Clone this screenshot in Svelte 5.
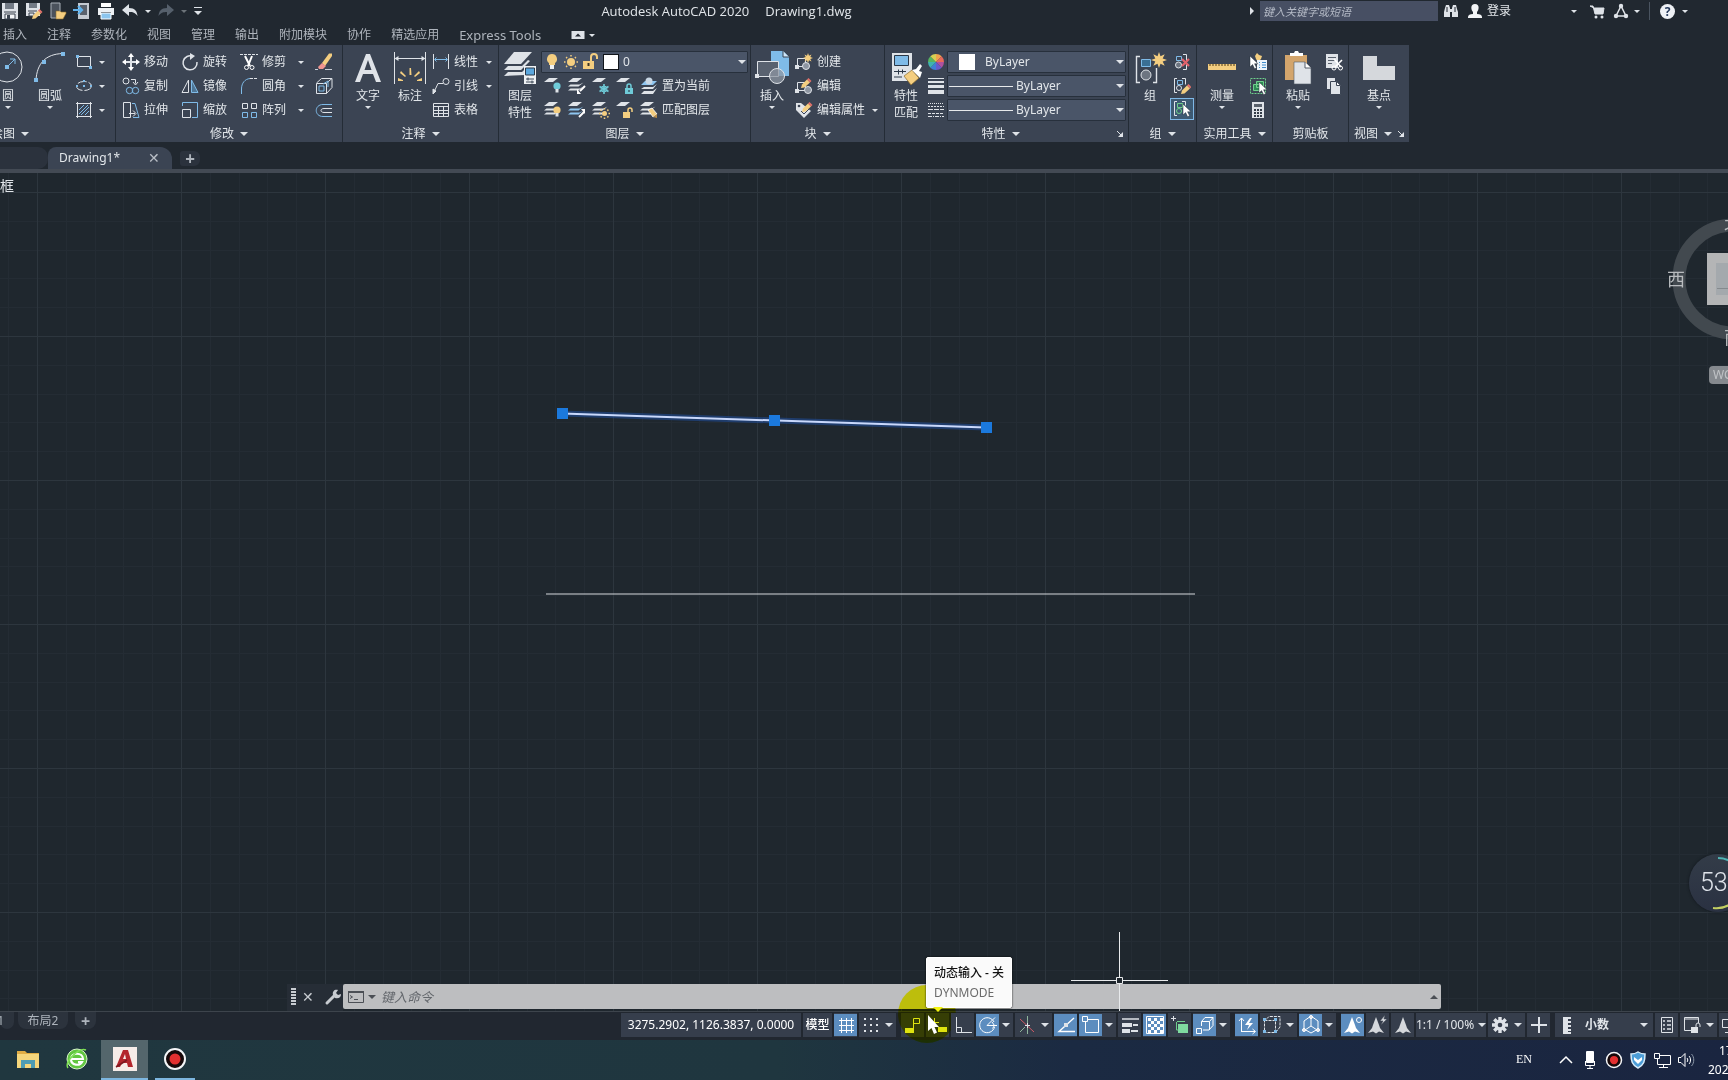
<script>
  const W = '#dfe3e8';
  const B = '#7fbbe8';
  const Y = '#f4ce80';
  const T = '#6fcbd8';
  const G = '#6fd08c';

  const sheet = (x, y, w, c) => `<path d="M${x} ${y + 4}l5-4h${w}l-5 4z" fill="${c}" stroke="none"/>`;
  const sheets = (c1, c2) =>
    sheet(0, 1, 9, W) +
    `<path d="M0 9.500l2.500-2h9l4-2-5 4zM0 13.500l2.500-2h9l3-1.500-4 3.500z" fill="${c1}" stroke="${c2}" stroke-width=".6"/>`;
  const bulb = (x, y, c) =>
    `<circle cx="${x}" cy="${y}" r="3.600" fill="${c}" stroke="none"/><path d="M${x - 1.5} ${y + 3}h3v3.500h-3z" fill="${W}" stroke="none"/>`;
  const pencil = (x, y) =>
    `<path d="M${x} ${y}l1-3.500 5-5 3 3-5.500 5z" fill="${Y}" stroke="none"/><path d="M${x + 6} ${y - 8.5}l1.500-1.500 3 3-1.500 1.500z" fill="#e2716a" stroke="none"/>`;
  const burst = (x, y, r, c) => {
    let d = '';
    for (let i = 0; i < 16; i++) {
      const a = (i * Math.PI) / 8;
      const q = i % 2 ? r * 0.5 : r;
      d += `${i ? 'L' : 'M'}${(x + q * Math.cos(a)).toFixed(1)} ${(y + q * Math.sin(a)).toFixed(1)}`;
    }
    return `<path d="${d}z" fill="${c}" stroke="none"/>`;
  };
  const sun = (x, y, r) => {
    let d = '';
    for (let i = 0; i < 8; i++) {
      const a = (i * Math.PI) / 4;
      d += `M${(x + (r + 1.5) * Math.cos(a)).toFixed(1)} ${(y + (r + 1.5) * Math.sin(a)).toFixed(1)}L${(x + (r + 3) * Math.cos(a)).toFixed(1)} ${(y + (r + 3) * Math.sin(a)).toFixed(1)}`;
    }
    return `<circle cx="${x}" cy="${y}" r="${r}" fill="${Y}" stroke="none"/><path d="${d}" stroke="${Y}" stroke-width="1.500"/>`;
  };
  const pointer = (x, y) =>
    `<path d="M${x} ${y}v11l2.600-2.400 2 4.200 2-1-2-4h3.500z" fill="#fff" stroke="#27303b" stroke-width=".5"/>`;
  const wheel = () => {
    const cs = ['#f0a34c', '#e8695a', '#b0519e', '#6a5acb', '#3f7fd6', '#3fb3b0', '#57b560', '#d8cf52'];
    return cs
      .map((c, i) => {
        const a = (i * Math.PI) / 4 - Math.PI / 2;
        const b = a + Math.PI / 4;
        return `<path d="M9 9L${(9 + 8 * Math.cos(a)).toFixed(1)} ${(9 + 8 * Math.sin(a)).toFixed(1)}A8 8 0 0 1 ${(9 + 8 * Math.cos(b)).toFixed(1)} ${(9 + 8 * Math.sin(b)).toFixed(1)}z" fill="${c}" stroke="none"/>`;
      })
      .join('');
  };
  const checker = () => {
    let s = '';
    for (let i = 0; i < 5; i++)
      for (let j = 0; j < 5; j++) if ((i + j) % 2 === 0) s += `<path d="M${5 + i * 3} ${5 + j * 3}h3v3h-3z" fill="#fff" stroke="none"/>`;
    return s;
  };
  const compass = 'M12 3l3 8 1 3 4 5-5-1.500-3 2-3-2L4 19l4-5 1-3z';

  const icons = {
    save: [18, 18, `<path d="M1 1h16v16H1z" fill="${W}" stroke="none"/><path d="M4 1h9v6H4zM10 2h2v4h-2z" fill="#737b86" stroke="none"/><path d="M3 10h12M4 12h10v5H4z" stroke="#3a434f" fill="#f4f6f8"/><path d="M6 13h3v4H6z" fill="#3a434f" stroke="none"/>`],
    saveas: [18, 18, `<path d="M1 1h14v13H1z" fill="${W}" stroke="none"/><path d="M4 1h8v5H4z" fill="#737b86" stroke="none"/><path d="M3 9h9M4 11h5v3H4z" stroke="#3a434f"/>` + pencil(7, 17)],
    open: [18, 18, `<path d="M2 1h9v15H2z" fill="#4b525c" stroke="#aab0b8"/><path d="M7 9h4l1 1h5v1.500l-3 5.500H7z" fill="${Y}" stroke="#8a6b2c" stroke-width=".6"/>`],
    upload: [18, 18, `<path d="M5 1h11v16H5z" fill="#c3c9d0" stroke="none"/><path d="M7 3h7v10H7z" fill="#59616c" stroke="none"/><path d="M0 8h8M5 4l4 4-4 4" stroke="#5fb0ea" stroke-width="2.200"/>`],
    print: [18, 18, `<path d="M4 1h10v4H4z" fill="#fff" stroke="none"/><path d="M1 6h16v7h-3v-3H4v3H1z" fill="#eef1f4" stroke="none"/><path d="M4 11h10v6H4z" fill="#8dc6ee" stroke="#fff" stroke-width="1"/>`],
    undo: [18, 18, `<path d="M1 8l7-6v4c6 0 8 3 8.500 8C14 10.500 12 10 8 10v4z" fill="${W}" stroke="none"/>`],
    redo: [18, 18, `<path d="M17 8l-7-6v4C4 6 2 9 1.500 14 4 10.500 6 10 10 10v4z" fill="#56606c" stroke="none"/>`],
    more: [10, 10, `<path d="M1 1.500h8" /><path d="M1 5h8L5 9z" fill="${W}" stroke="none"/>`],
    bino: [16, 16, `<path d="M2 5l1-3h3l1 3v9H1V9zM9 5l1-3h3l1 4 1 3v5H9z" fill="${W}" stroke="none"/><path d="M7 6h2v3H7z" fill="${W}" stroke="none"/><path d="M4 4v5M12 4v5" stroke="#212730"/>`],
    user: [14, 16, `<path d="M7 1c5 0 4 6 2 8v2c3 0 5 1 5 3v1H0v-1c0-2 2-3 5-3V9C3 7 2 1 7 1z" fill="#f2f4f6" stroke="none"/>`],
    cart: [16, 16, `<path d="M1 3h3l2 8h8l1-6H5z" fill="${W}" stroke="${W}"/><circle cx="7" cy="14" r="1.500" fill="${W}" stroke="none"/><circle cx="13" cy="14" r="1.500" fill="${W}" stroke="none"/>`],
    share: [16, 16, `<path d="M8 3L3 13h10z" stroke-width="1.500"/><circle cx="8" cy="3" r="2.200" fill="${W}" stroke="none"/><circle cx="3" cy="13" r="2.200" fill="${W}" stroke="none"/><circle cx="13" cy="13" r="2.200" fill="${W}" stroke="none"/>`],
    ribbon: [14, 8, `<path d="M1 0h12v8H1z" fill="${W}" stroke="${W}" stroke-linejoin="round"/><path d="M4 5.500L7 2.500l3 3z" fill="#212730" stroke="none"/>`],
    circle: [34, 34, `<circle cx="16" cy="16" r="15"/><path d="M16 16l8-8M19 8h5v5" stroke="${B}"/><path d="M14 14h4v4h-4z" fill="${B}" stroke="none"/>`],
    arc: [34, 34, `<path d="M3 29C4 13 12 3 30 2.500"/><path d="M1 27h4v4H1zM9 9h4v4H9zM28 1h4v4h-4z" fill="${B}" stroke="none"/>`],
    rect: [18, 18, `<path d="M2.500 3.500h13v10h-13z"/><path d="M1 2h3v3H1zM14 13h3v3h-3z" fill="${B}" stroke="none"/>`],
    ellipse: [18, 18, `<ellipse cx="9" cy="9" rx="7.500" ry="4.500" stroke-dasharray="9 2"/><path d="M8 8h2v2H8zM1 8h2v2H1zM15 8h2v2h-2zM8 3h2v2H8z" fill="${B}" stroke="none"/>`],
    hatch: [18, 18, `<path d="M1 2.500h16M1 15.500h16M2.500 1v16M15.500 1v16"/><path d="M4 9l5-5M4 13l9-9M6 14l8-8M10 14l4-4" stroke="${B}"/>`],
    move: [18, 18, `<path d="M9 2v14M2 9h14" stroke-width="2"/><path d="M9 0l3 4H6zM9 18l3-4H6zM0 9l4-3v6zM18 9l-4-3v6z" fill="#fff" stroke="none"/>`],
    rotate: [18, 18, `<path d="M12 3.500A7 7 0 1 0 16 9" stroke-width="1.500"/><path d="M9 0l5 3-5 4z" fill="${W}" stroke="none"/>`],
    trim: [18, 18, `<path d="M0 1.500h18" stroke-dasharray="3 1"/><path d="M5 3l5 10M12 3l-4 10" stroke-width="2" stroke="#fff"/><circle cx="6.500" cy="14.500" r="2" stroke="#fff"/><circle cx="12" cy="14.500" r="2" stroke="#fff"/>`],
    erase: [18, 18, `<path d="M0 16.500h3M10 16.500h7" stroke="#c9ced5"/><path d="M7 10l7-9.500h3V3l-7 10z" fill="${Y}" stroke="none"/><path d="M7 10l4 3-3 3H4l-1-2z" fill="#ef9490" stroke="none"/>`],
    copy: [18, 18, `<circle cx="4" cy="4" r="3"/><path d="M9 2.500h4.500v4M11 5l2.500 3L16 5"/><circle cx="7.500" cy="13.500" r="3.200" stroke="${B}"/><circle cx="13.500" cy="13.500" r="3.200" stroke="${B}"/>`],
    mirror: [18, 18, `<path d="M7.500 3v12.500H1z"/><path d="M10.500 3v12.500H17z" stroke="${B}" fill="#4e7696"/>`],
    fillet: [18, 18, `<path d="M1.500 17v-5C1.500 6 5 2 10 1.500" stroke="${B}"/><path d="M10 1.500h7" stroke-dasharray="3 1"/>`],
    box: [18, 18, `<path d="M1.500 6.500h10v10h-10zM1.500 6l5-4.500H17v9l-5.500 6M11.500 6L17 1.500"/><path d="M4 9h5v5H4zM8 7l5-3v6" stroke="${B}"/>`],
    stretch: [18, 18, `<path d="M1.500 1.500h7v15h-7zM7 12.500h6M11 9.500l3 3-3 3"/><path d="M10 2.500h3l4 14h-6" stroke="${B}"/>`],
    scale: [18, 18, `<path d="M1.500 5V1.500h15v15H11" stroke="${B}"/><path d="M1.500 8.500h8v8h-8z"/>`],
    array: [18, 18, `<path d="M2.500 2.500h5v5h-5zM11.500 2.500h5v5h-5z"/><path d="M2.500 11.500h5v5h-5zM11.500 11.500h5v5h-5z" stroke="${B}"/>`],
    offset: [18, 18, `<path d="M17 3.500H8C-1 3.500-1 15.500 8 15.500h9" stroke="${B}"/><path d="M17 7.500H9c-4 0-4 4 0 4h8"/>`],
    text: [34, 34, `<path d="M4 31L15 3h4l11 28h-5l-3-8H12l-3 8zM13.500 19h7L17 9z" fill="${W}" stroke="none" fill-rule="evenodd"/>`],
    dim: [34, 34, `<path d="M1.500 1v32M32.500 1v32M3 7.500h28"/><path d="M1.500 7.500l4-2.500v5zM32.500 7.500l-4-2.500v5z" fill="${W}" stroke="none"/><path d="M5 27l5 2v1H5zM29 27l-5 2v1h5zM8 20l5 5-1 1-5-4zM26 20l-5 5 1 1 5-4zM16.500 17h1.500l.5 7h-2z" fill="${Y}" stroke="none"/>`],
    linear: [18, 18, `<path d="M1.500 1v15M16.500 1v15"/><path d="M3 6.500h12M4.500 4.500l-2 2 2 2M13.500 4.500l2 2-2 2" stroke="${B}"/>`],
    leader: [18, 18, `<path d="M2 15L6 6.500h5"/><path d="M1 17v-5l3 2z" fill="${W}"/><circle cx="14" cy="4.500" r="3"/>`],
    table: [18, 18, `<path d="M1.500 2.500h15v13h-15zM1 5.500h16M1 9.500h16M1 12.500h16M6.500 5v11M11.500 5v11"/>`],
    layers: [34, 34, `<path d="M1 13L11 1h18L18 13z" fill="${W}" stroke="none"/><path d="M1 19l4-4h14l6-6 2 1-9 9zM1 25l4-4h14l3-3v6z" fill="${W}" stroke="none"/><path d="M21 15h12v18H21z" fill="#eef1f4" stroke="none"/><path d="M22.500 17h9v7h-9z" fill="#5ba7de" stroke="#2b3848"/><path d="M23 28h8M23 31h8M25 26.500v3M29 29.500v3" stroke="#2b3848" stroke-width=".9"/>`],
    l1: [18, 18, sheet(0, 1, 9, W) + bulb(13, 9, T)],
    l2: [18, 18, sheets(W, 'none') + `<path d="M17 9l-5 5" stroke-width="2" stroke="#fff"/><path d="M9 17v-5l4 5z" fill="#fff" stroke="none"/>`],
    l3: [18, 18, sheet(0, 1, 9, W) + `<path d="M12 7v10M7.500 9.500l9 5M16.500 9.500l-9 5" stroke="${T}" stroke-width="1.600"/><circle cx="12" cy="12" r="3"  stroke="${T}"/>`],
    l4: [18, 18, sheet(0, 1, 9, W) + `<path d="M9 11h8v6H9z" fill="${T}" stroke="none"/><path d="M11 11V9a2 2 0 0 1 4 0v2" stroke="${T}" stroke-width="1.500"/><path d="M13 13v2" stroke="#223"/>`],
    l5: [18, 18, `<path d="M1 8l4-4h12l-4 4z" fill="#8ec5ef" stroke="none"/><path d="M1 12l3-2h9l4-3-4 5zM1 17l3-3h9l4-3-4 6z" fill="${W}" stroke="none"/><circle cx="9" cy="4" r="3.500" fill="#c9d7e4" stroke="none"/>`],
    l6: [18, 18, sheets(W, 'none') + bulb(13, 9, Y)],
    l7: [18, 18, sheets('#8ec5ef', 'none') + `<path d="M11 16l5-5" stroke-width="2" stroke="#fff"/><path d="M17 8v5l-4-5z" fill="#fff" stroke="none"/>`],
    l8: [18, 18, sheets(W, 'none') + sun(12.5, 12.5, 2.5)],
    l9: [18, 18, sheet(0, 1, 9, W) + `<path d="M7 11h7v6H7z" fill="${Y}" stroke="none"/><path d="M12 11V9a2 2 0 0 1 4 0v2" stroke="${Y}" stroke-width="1.500"/>`],
    l10: [18, 18, sheets(W, 'none') + `<path d="M8 9l4-2 5 6-4 3z" fill="${Y}" stroke="#fff" stroke-width=".8"/><path d="M13 16l4-3v4z" fill="#b98d49" stroke="none"/>`],
    bulb: [18, 18, `<path d="M9 1a5 5 0 0 1 3 9v2H6v-2a5 5 0 0 1 3-9z" fill="${Y}" stroke="none"/><path d="M7 12h4v4H7z" fill="#eef1f4" stroke="none"/>`],
    sun: [18, 18, sun(9, 9, 4)],
    unlock: [18, 18, `<path d="M2 8h11v8H2z" fill="${Y}" stroke="none"/><path d="M10 8V4a3 3 0 0 1 6 0v2" stroke="${Y}" stroke-width="2"/><path d="M7.500 10v3" stroke="#3b3426" stroke-width="2"/>`],
    insert: [34, 34, `<path d="M16 0h12l6 6v19H16z" fill="#7fbbe8" stroke="none"/><path d="M28 0v6h6" fill="#cfe6f8" stroke="#3b4453"/><path d="M2.500 10.500h21v15h-21z" fill="#596270"/><circle cx="22" cy="25" r="7.500" fill="#8e96a2" fill-opacity=".75"/><path d="M0 23h4v4H0z" fill="${W}" stroke="none"/>`],
    bcreate: [18, 18, `<path d="M2.500 5.500h8v8h-8z"/><circle cx="11" cy="13" r="3.500" fill="#8e96a2"/><path d="M0 12h4v4H0z" fill="${W}" stroke="none"/>` + burst(13, 5, 5, Y)],
    bedit: [18, 18, `<path d="M2.500 5.500h8v8h-8z"/><circle cx="13" cy="13" r="3.500" fill="#8e96a2"/><path d="M0 12h4v4H0z" fill="${W}" stroke="none"/>` + pencil(6, 11)],
    battr: [18, 18, `<path d="M1 2h5l10 8-7 7-8-8z" fill="${W}" stroke="none"/><circle cx="4" cy="5" r="1.300" fill="#3b4453" stroke="none"/><path d="M6 10l3 3 5-5" stroke="#3b4453"/>` + pencil(7, 11)],
    match: [34, 34, `<path d="M3 2h20v28H3z" fill="${W}" stroke="none"/><path d="M5.500 4.500h14v10h-14z" fill="#7fbbe8" stroke="#2b3848"/><path d="M5 20.500h12M5 26h8M9.500 18.500v5M13.500 18.500v4" stroke="#2b3848"/><path d="M15 25l8-6 7 8-8 7z" fill="${Y}" stroke="#8a6b2c" stroke-width=".7"/><path d="M23 19l4-1 4-5 2 2-3 5 3 1-2 6z" fill="#fff" stroke="none"/>`],
    wheel: [18, 18, wheel()],
    weights: [18, 18, `<path d="M1 1.500h16" stroke-width="1"/><path d="M1 5h16" stroke-width="2"/><path d="M1 9.500h16" stroke-width="3"/><path d="M1 15h16" stroke-width="4"/>`],
    types: [18, 18, `<path d="M1 2.500h16" stroke-dasharray="1 1"/><path d="M1 5.500h16" stroke-dasharray="2 1"/><path d="M1 8.500h16" stroke-dasharray="5 1"/><path d="M1 12.500h16" stroke-dasharray="3 1"/><path d="M1 15.500h16" stroke-dasharray="4 1 1 1"/>`],
    group: [34, 34, `<path d="M7 5.500H3.500v26H7M20 31.500h3.500V17" stroke-width="1.400"/><path d="M8.500 8.500h9v7h-9z" fill="#3a6f94" stroke="${B}"/><circle cx="13" cy="24" r="5" fill="#6d7581"/>` + burst(26, 9, 8, Y)],
    g1: [18, 18, `<path d="M10 1.500h3.500v15H10" /><path d="M3.500 3.500h5v4h-5z" stroke="${B}"/><circle cx="5.500" cy="12" r="3" fill="#6d7581"/><path d="M9 6l7 7M16 6l-7 7" stroke="#e0626b" stroke-width="2.200"/>`],
    g2: [18, 18, `<path d="M4 1.500H1.500v14H4M9 1.500h3.500v6" /><path d="M4.500 3.500h5v4h-5z" stroke="${B}"/><circle cx="6" cy="11" r="2.500"/>` + pencil(8, 17)],
    g3: [18, 18, `<path d="M4 1.500H1.500v14H4M9 1.500h3.500v4"/><path d="M4.500 3.500h5v4h-5z" stroke="${G}"/><circle cx="6" cy="11" r="2.500" stroke="${G}"/>` + pointer(10, 4)],
    ruler: [34, 34, `<path d="M3 13h28v6H3z" fill="${Y}" stroke="none"/><path d="M5 13v2M8 13v2M11 13v2M14 13v2M17 13v2M20 13v2M23 13v2M26 13v2M29 13v2" stroke="#6b5426" stroke-width="1.200"/>`],
    qsel: [18, 18, `<path d="M8 0l2 2 3 1-1 3-3 3-2-3-1-3z" fill="${Y}" stroke="none"/><path d="M8 7h10v10H8z" fill="#eef5fb" stroke="none"/><path d="M10 9.500h1M13 9.500h4M10 12h1M13 12h4M10 14.500h1M13 14.500h4" stroke="#3f8ccc" stroke-width="1.200"/>` + pointer(1, 3)],
    selall: [18, 18, `<path d="M1.500 1.500h15v15h-15z" stroke="${G}" stroke-dasharray="2 1"/><path d="M4.500 7.500h8v6h-8zM7.500 4.500h7v6h-7z" fill="#2f8a55" stroke="${G}"/>` + pointer(10, 5)],
    calc: [18, 18, `<path d="M3 1h12v16H3z" fill="${W}" stroke="none"/><path d="M5 3h8v3H5z" fill="#59616c" stroke="none"/><path d="M5 9h8M5 12h8M5 15h8" stroke="#333c48" stroke-width="2" stroke-dasharray="2 1"/>`],
    paste: [34, 34, `<path d="M4 4h22v25H4z" fill="#d3a56c" stroke="none"/><path d="M9 2h4l1-2h3l1 2h4v3H9z" fill="#fff" stroke="none"/><path d="M13 11h11l6 6v16H13z" fill="${W}" stroke="#525b67" stroke-width=".6"/><path d="M24 11v6h6" fill="#fff" stroke="#525b67"/>`],
    cut: [18, 18, `<path d="M1 1h12v14H1z" fill="${W}" stroke="none"/><path d="M3 4.500h8M3 7.500h8M3 10.500h4" stroke="#59616c"/><path d="M9 6l7 8M17 7l-7 7" stroke="#fff" stroke-width="1.600"/><circle cx="9" cy="15" r="2" stroke="#fff"/><circle cx="15.500" cy="15" r="2" stroke="#fff"/>`],
    clip: [18, 18, `<path d="M2 1h8v11H2z" fill="${W}" stroke="none"/><path d="M5.500 4.500h6l4 4v9h-10z" fill="${W}" stroke="#3b4453"/><path d="M11.500 5v3.500H15" fill="#fff" stroke="#3b4453"/>`],
    base: [34, 34, `<path d="M1 5h14v10h18v14H1z" fill="#d5d8dc" stroke="none"/>`],
    launch: [8, 8, `<path d="M1 1l4 4" stroke-width="1"/><path d="M7 2v5H2z" fill="${W}" stroke="none"/>`],
    wrench: [18, 18, `<path d="M3 15l7-7" stroke="#c8ccd1" stroke-width="3" stroke-linecap="round"/><path d="M9 7c-1-4 2-6 5-5l-2 3 2 2 3-1c0 4-3 5-6 4z" fill="#c8ccd1" stroke="none"/>`],
    cmd: [18, 14, `<path d="M1.500 1.500h15v11h-15z" stroke="#4b4f55"/><path d="M1 2h16" stroke="#4b4f55" stroke-width="2"/><path d="M3 5.500L5.500 7 3 8.500M7 9.500h4" stroke="#4b4f55"/>`],
    grid: [24, 24, `<path d="M5 7.500h15M5 12.500h15M5 17.500h15M7.500 5v15M12.500 5v15M17.500 5v15"/>`],
    snap: [24, 24, `<path d="M5 6h2M11 6h2M17 6h2M5 12h2M11 12h2M17 12h2M5 18h2M11 18h2M17 18h2" stroke-width="2"/>`],
    infer: [24, 24, `<path d="M12.500 16V5.500h6v5h-6"/><path d="M4 15h9v5H4z" fill="${W}" stroke="none"/>`],
    dyn: [24, 24, `<path d="M4 9.500h9M8.500 5v9"/><path d="M12 14h9v5h-9z" fill="${W}" stroke="none"/>`],
    ortho: [24, 24, `<path d="M5.500 4v15.500H21M5.500 14.500h5v5"/>`],
    polar: [24, 24, `<path d="M18 9a7.500 7.500 0 1 0 .5 5"/><path d="M11 12.500h10M11 12.500l8-8"/><path d="M16 9l2.500 3.500-2 3"/>`],
    iso: [24, 24, `<path d="M5 6l14 13" stroke="#d05a66"/><path d="M12.500 3v18M5 19l5-5" stroke="#8fb59c"/><path d="M10 12.500h5M12.500 10v5"/>`],
    track: [24, 24, `<path d="M20 5L5 18.500h16" stroke-width="1.400"/><path d="M10 10h4v4h-4z" fill="${W}" stroke="none"/>`],
    osnap: [24, 24, `<path d="M6.500 6.500h13v13h-13z"/><path d="M3.500 3.500h5v5h-5z" fill="#5c8dbf"/>`],
    lwt: [24, 24, `<path d="M4 6h7M13 6h8M4 6h16" stroke-width="1.500"/><path d="M4 12h10" stroke-width="4"/><path d="M15 12h5" stroke-width="2"/><path d="M4 18h8" stroke-width="4"/><path d="M13 18h7" stroke-width="2"/>`],
    transp: [24, 24, `<path d="M3.500 3.500h17v17h-17z" />` + checker()],
    cycle: [24, 24, `<path d="M3 5.500h5M5.500 3v5"/><path d="M8.500 9v8H10M9 8.500h8" stroke="${G}"/><path d="M10 11h10v9H10z" fill="#7fdba0" stroke="none"/>`],
    osnap3: [24, 24, `<path d="M8.500 13V8.500L12 4.500h8v8l-4 4.500H10M8.500 8.500h8V17M16.500 8.500l3.500-4"/><path d="M3.500 15.500h5v5h-5z" fill="#5c8dbf"/>`],
    ucs: [24, 24, `<path d="M6.500 19V5M6 18.500h14M4 8l2.500-3L9 8M17.500 16l3 2.500-3 2.500"/><path d="M15 5l-5 7h4l-2 5 6-7h-4l3-5z" fill="#fff" stroke="none"/>`],
    filter: [24, 24, `<path d="M4.500 7.500h11v12h-11zM16 19l4-5V3.500H9l-4 4" stroke-dasharray="3 1"/><path d="M3 5h3v3H3zM14 5h3v3h-3zM3 17h3v3H3zM14 17h3v3h-3z" fill="${B}" stroke="none"/>`],
    gizmo: [24, 24, `<path d="M12 3l7 5v8l-7 4-7-4V8zM12 4v9M12 13l-6 4M12 13l6 4"/><circle cx="5" cy="17" r="1.500" fill="${W}"/><circle cx="19" cy="17" r="1.500" fill="${W}"/><circle cx="12" cy="4" r="1.500" fill="${W}"/>`],
    anno1: [24, 24, `<path d="${compass}" fill="#fff" stroke="none" transform="translate(-1 1)"/><circle cx="18" cy="7" r="2.500"/>`],
    anno2: [24, 24, `<path d="${compass}" fill="#d5d8dc" stroke="none" transform="translate(-2 1)"/><path d="M19 2l-5 6h3l-2 4 6-6h-3z" fill="#d5d8dc" stroke="#363e4c" stroke-width=".5"/>`],
    anno3: [24, 24, `<path d="${compass}" fill="#d5d8dc" stroke="none" transform="translate(0 1)"/>`],
    gear: [24, 24, `<path d="M12 4v16M4 12h16M6.300 6.300l11.400 11.400M17.700 6.300L6.300 17.700" stroke-width="3.400"/><circle cx="12" cy="12" r="5.500" fill="${W}" stroke="none"/><circle cx="12" cy="12" r="2.300" fill="#363e4c" stroke="none"/>`],
    plus: [24, 24, `<path d="M12 4v16M4 12h16" stroke-width="2"/>`],
    rulerv: [24, 24, `<path d="M8 4h8v2h-3v2h3v2h-3v2h3v2h-3v2h3v2h-3v1h3v2H8z" fill="${W}" stroke="none"/>`],
    props: [24, 24, `<path d="M6.500 4.500h11v15h-11z"/><path d="M8 8h2M12 8h4M8 12h2M12 12h4M8 16h2M12 16h4" stroke-width="1.600"/>`],
    lockui: [24, 24, `<path d="M11 17.500H4.500v-13h14V10M4 6h15"/><path d="M11 14h7v6h-7z" fill="${W}" stroke="none"/><path d="M16 14v-2a2 2 0 0 1 4 0v2"/>`],
    iso2: [24, 24, `<path d="M3.500 6.500h10v8h-10zM6 19.500h6M10 14v4"/>`],
    folder: [24, 24, `<path d="M1 4h8l2 2h12v15H1z" fill="#e0ad45" stroke="none"/><path d="M1 7h22v14H1z" fill="#f5d67c" stroke="none"/><path d="M5 21v-8h14v8h-4v-4H9v4z" fill="#4d9cb4" stroke="none"/>`],
    ie: [24, 24, `<circle cx="12" cy="12" r="10" fill="#62c641" stroke="#d9f5cc" stroke-width="1"/><path d="M6 12h12c0-7-12-7-12 0s9 7 11 3h-4" stroke="#fff" stroke-width="2.200"/><path d="M3 21C-1 15 14 0 21 3" stroke="#7ddf55" stroke-width="1.500"/>`],
    cad: [24, 24, `<path d="M0 0h24v24H0z" fill="#f6ece8" stroke="none"/><path d="M3 20L10 3h5l5 17h-5l-1-4H9l-2 4zM10 12h3l-1-5z" fill="#b3262d" stroke="none" fill-rule="evenodd"/><path d="M3 20l11-7" stroke="#7d1820" stroke-width="1.500"/>`],
    rec: [24, 24, `<circle cx="12" cy="12" r="10" fill="#17090a" stroke="#f4f6f8" stroke-width="2"/><circle cx="12" cy="12" r="5.500" fill="#e33030" stroke="none"/>`],
    chev: [16, 20, `<path d="M2 13l6-6 6 6" stroke="#fff" stroke-width="1.500"/>`],
    mic: [16, 20, `<path d="M5 2h6v10H5z" fill="#fff" stroke="#fff" stroke-width="2" stroke-linejoin="round"/><path d="M3.500 11v4.500h9V11M8 15v3M5 18.500h6" stroke="#fff"/>`],
    shield: [18, 20, `<path d="M9 2c3 2 5 2 7 2 0 7-1 11-7 14C3 15 2 11 2 4c2 0 4 0 7-2z" fill="#4d9ed8" stroke="#d8ecfa" stroke-width="1.500"/><path d="M5 7l4 3 4-3v3l-4 4-4-4z" fill="#fff" stroke="none"/>`],
    net: [18, 20, `<path d="M6 5.500h11.500v9h-13V10M10.500 14v3M6 17.500h9M1.500 3.500h5v5h-5zM4.500 9v5" stroke="#fff"/>`],
    sound: [18, 20, `<path d="M1.500 7.500H4l4-4v13l-4-4H1.500z" stroke="#fff"/><path d="M10 8c1 1 1 3 0 4M12 6c2 2 2 6 0 8" stroke="#fff"/><path d="M14.500 4c3 3 3 9 0 12" stroke="#8c98a8"/>`]
  };

  const menus = ['插入', '注释', '参数化', '视图', '管理', '输出', '附加模块', '协作', '精选应用', 'Express Tools'];

  const status = [
    { ic: 'grid', name: '栅格', on: true },
    { ic: 'snap', name: '捕捉', drop: true, sep: 'wide' },
    { ic: 'infer', name: '推断约束' },
    { ic: 'dyn', name: '动态输入', tip: true },
    { ic: 'ortho', name: '正交' },
    { ic: 'polar', name: '极轴追踪', on: true, drop: true },
    { ic: 'iso', name: '等轴测草图', drop: true },
    { ic: 'track', name: '对象捕捉追踪', on: true },
    { ic: 'osnap', name: '二维对象捕捉', on: true, drop: true },
    { ic: 'lwt', name: '线宽' },
    { ic: 'transp', name: '透明度', on: true },
    { ic: 'cycle', name: '选择循环' },
    { ic: 'osnap3', name: '三维对象捕捉', on: true, drop: true, sep: 'wide' },
    { ic: 'ucs', name: '动态 UCS', on: true },
    { ic: 'filter', name: '选择过滤', drop: true },
    { ic: 'gizmo', name: '小控件', on: true, drop: true, sep: 'wide' },
    { ic: 'anno1', name: '注释可见性', on: true },
    { ic: 'anno2', name: '自动缩放' },
    { ic: 'anno3', name: '注释比例' }
  ];
</script>

{#snippet icon(name)}
  <svg class="ico" width={icons[name][0]} height={icons[name][1]} viewBox="0 0 {icons[name][0]} {icons[name][1]}" aria-hidden="true">{@html icons[name][2]}</svg>
{/snippet}

{#snippet big(name, lines, arrow)}
  <button class="big">
    <span class="pic">{@render icon(name)}</span>
    {#each lines as line}<span class="cap">{line}</span>{/each}
    {#if arrow}<i class="tri"></i>{/if}
  </button>
{/snippet}

{#snippet small(name, label, arrow, aria)}
  <div class="small">
    <button class="act" aria-label={label || aria}>{@render icon(name)}{#if label}<span>{label}</span>{/if}</button>
    {#if arrow}<button class="drop" aria-label="更多选项"><i class="tri"></i></button>{/if}
  </div>
{/snippet}

{#snippet title(text, arrow, launcher)}
  <div class="ptitle">
    <button class="pname">{text}{#if arrow}<i class="tri lg"></i>{/if}</button>
    {#if launcher}<button class="launch" aria-label="对话框">{@render icon('launch')}</button>{/if}
  </div>
{/snippet}

<div class="app">
  <header class="titlebar">
    <div class="qat">
      {#each [['save', '保存'], ['saveas', '另存为'], ['open', '打开'], ['upload', '保存到云'], ['print', '打印'], ['undo', '放弃']] as [n, l]}
        <button aria-label={l}>{@render icon(n)}</button>
      {/each}
      <button class="mini" aria-label="放弃列表"><i class="tri"></i></button>
      <button aria-label="重做">{@render icon('redo')}</button>
      <button class="mini dim" aria-label="重做列表"><i class="tri"></i></button>
      <button class="mini" aria-label="自定义">{@render icon('more')}</button>
    </div>
    <h1><span>Autodesk AutoCAD 2020</span><span>Drawing1.dwg</span></h1>
    <div class="tools">
      <i class="play"></i>
      <input class="search" aria-label="搜索" placeholder="键入关键字或短语" />
      <button class="bino" aria-label="搜索">{@render icon('bino')}</button>
      <button class="login">{@render icon('user')}<span>登录</span><i class="tri"></i></button>
      <button class="cart" aria-label="应用商店">{@render icon('cart')}</button>
      <button class="share" aria-label="保持连接">{@render icon('share')}<i class="tri"></i></button>
      <button class="help" aria-label="帮助"><b>?</b><i class="tri"></i></button>
    </div>
  </header>

  <nav class="menus">
    {#each menus as m}<button class:latin={m === 'Express Tools'}>{m}</button>{/each}
    <button class="min" aria-label="最小化功能区">{@render icon('ribbon')}<i class="tri"></i></button>
  </nav>

  <div class="ribbon">
    <section class="panel draw">
      <div class="body">
        {@render big('circle', ['圆'], true)}
        {@render big('arc', ['圆弧'], true)}
        <div class="col">
          {@render small('rect', '', true, '矩形')}
          {@render small('ellipse', '', true, '椭圆')}
          {@render small('hatch', '', true, '图案填充')}
        </div>
      </div>
      {@render title('绘图', true)}
    </section>

    <section class="panel modify">
      <div class="body">
        <div class="col">
          {@render small('move', '移动')}
          {@render small('copy', '复制')}
          {@render small('stretch', '拉伸')}
        </div>
        <div class="col">
          {@render small('rotate', '旋转')}
          {@render small('mirror', '镜像')}
          {@render small('scale', '缩放')}
        </div>
        <div class="col">
          {@render small('trim', '修剪', true)}
          {@render small('fillet', '圆角', true)}
          {@render small('array', '阵列', true)}
        </div>
        <div class="col">
          {@render small('erase', '', false, '删除')}
          {@render small('box', '', false, '分解')}
          {@render small('offset', '', false, '偏移')}
        </div>
      </div>
      {@render title('修改', true)}
    </section>

    <section class="panel annotate">
      <div class="body">
        {@render big('text', ['文字'], true)}
        {@render big('dim', ['标注'])}
        <div class="col">
          {@render small('linear', '线性', true)}
          {@render small('leader', '引线', true)}
          {@render small('table', '表格')}
        </div>
      </div>
      {@render title('注释', true)}
    </section>

    <section class="panel layer">
      <div class="body">
        {@render big('layers', ['图层', '特性'])}
        <div class="col grow">
          <div class="combo">
            {@render icon('bulb')}{@render icon('sun')}{@render icon('unlock')}<i class="swatch"></i>
            <select aria-label="图层"><option>0</option></select><i class="tri lg"></i>
          </div>
          <div class="line">
            {#each ['l1', 'l2', 'l3', 'l4'] as n}{@render small(n, '', false, '图层工具')}{/each}
            {@render small('l5', '置为当前')}
          </div>
          <div class="line">
            {#each ['l6', 'l7', 'l8', 'l9'] as n}{@render small(n, '', false, '图层工具')}{/each}
            {@render small('l10', '匹配图层')}
          </div>
        </div>
      </div>
      {@render title('图层', true)}
    </section>

    <section class="panel block">
      <div class="body">
        {@render big('insert', ['插入'], true)}
        <div class="col">
          {@render small('bcreate', '创建')}
          {@render small('bedit', '编辑')}
          {@render small('battr', '编辑属性', true)}
        </div>
      </div>
      {@render title('块', true)}
    </section>

    <section class="panel props">
      <div class="body">
        {@render big('match', ['特性', '匹配'])}
        <div class="col grow">
          <div class="line">
            {@render icon('wheel')}
            <div class="combo"><i class="swatch lg"></i><select aria-label="颜色"><option>ByLayer</option></select><i class="tri lg"></i></div>
          </div>
          <div class="line">
            {@render icon('weights')}
            <div class="combo rule"><i class="stroke"></i><select aria-label="线宽"><option>ByLayer</option></select><i class="tri lg"></i></div>
          </div>
          <div class="line">
            {@render icon('types')}
            <div class="combo rule"><i class="stroke"></i><select aria-label="线型"><option>ByLayer</option></select><i class="tri lg"></i></div>
          </div>
        </div>
      </div>
      {@render title('特性', true, true)}
    </section>

    <section class="panel group">
      <div class="body">
        {@render big('group', ['组'])}
        <div class="col">
          {@render small('g1', '', false, '解除编组')}
          {@render small('g2', '', false, '组编辑')}
          <div class="picked">{@render small('g3', '', false, '组选择')}</div>
        </div>
      </div>
      {@render title('组', true)}
    </section>

    <section class="panel util">
      <div class="body">
        {@render big('ruler', ['测量'], true)}
        <div class="col">
          {@render small('qsel', '', false, '快速选择')}
          {@render small('selall', '', false, '全部选择')}
          {@render small('calc', '', false, '计算器')}
        </div>
      </div>
      {@render title('实用工具', true)}
    </section>

    <section class="panel clipb">
      <div class="body">
        {@render big('paste', ['粘贴'], true)}
        <div class="col">
          {@render small('cut', '', false, '剪切')}
          {@render small('clip', '', false, '复制剪裁')}
        </div>
      </div>
      {@render title('剪贴板')}
    </section>

    <section class="panel view">
      <div class="body">{@render big('base', ['基点'], true)}</div>
      {@render title('视图', true, true)}
    </section>
  </div>

  <nav class="files">
    <button class="tab prev" aria-label="开始"></button>
    <div class="tab active"><button>Drawing1*</button><button class="x" aria-label="关闭">✕</button></div>
    <button class="tab add" aria-label="新图形">+</button>
  </nav>

  <main class="canvas">
    <svg class="scene" width="100%" height="100%" aria-label="图形">
      <defs>
        <pattern id="gridp" x="37" y="19" width="144" height="144" patternUnits="userSpaceOnUse">
          <path d="M29.5 0v144M58.5 0v144M86.5 0v144M115.5 0v144M0 29.500h144M0 58.500h144M0 86.500h144M0 115.500h144" stroke="#242c34" fill="none" />
          <path d="M.5 0v144M0 .5h144" stroke="#2d363e" fill="none" />
        </pattern>
      </defs>
      <rect width="100%" height="100%" fill="url(#gridp)" />
      <path d="M562 240.500L986 254.500" stroke="#1f4f9e" stroke-width="6" stroke-opacity=".55" />
      <path d="M562 240.500L986 254.500" stroke="#c9d8fb" stroke-width="2" />
      <path d="M557 235h11v11h-11zM769 242h11v11h-11zM981 249h11v11h-11z" fill="#1b79dd" />
      <path d="M546 421h649" stroke="#d6d9dc" stroke-width="1" />
    </svg>
    <span class="vp">框</span>

    <svg class="cube" width="62" height="136" viewBox="0 0 62 136" aria-label="视图方位">
      <circle cx="67" cy="64" r="54" fill="none" stroke="#42494f" stroke-width="13" />
      <path d="M41 38h40v52H41z" fill="#b4b5b6" />
      <path d="M50 48h30v32H50z" fill="#a4a9ad" />
      <path d="M51 73.500h20" stroke="#858a8e" fill="none" />
      <text x="1" y="71">西</text>
      <text x="58" y="16">北</text>
      <text x="58" y="129">南</text>
    </svg>
    <button class="wcs">WCS</button>
    <div class="badge">
      <svg width="58" height="58" viewBox="0 0 58 58" aria-hidden="true">
        <path d="M29 4a25 25 0 0 1 18 8" stroke="#4fb4b4" stroke-width="2" fill="none" />
        <path d="M24 54a25 25 0 0 0 20-6" stroke="#c3cf62" stroke-width="2" fill="none" />
      </svg>
      <span>53</span>
    </div>

    <div class="command">
      <div class="handle">
        <i class="dots"></i>
        <button aria-label="关闭">✕</button>
        <button class="wrench" aria-label="自定义">{@render icon('wrench')}</button>
      </div>
      <div class="entry">
        {@render icon('cmd')}<i class="tri lg"></i>
        <input aria-label="命令行" placeholder="键入命令" />
        <button class="up" aria-label="历史记录"><i class="tri lg"></i></button>
      </div>
    </div>
    <svg class="cross" width="97" height="79" viewBox="0 0 97 79" aria-hidden="true">
      <path d="M0 48.500h45M52 48.500h45M48.500 0v45M48.500 52v27M45.500 45.500h6v6h-6z" stroke="#e8eaec" fill="none" />
    </svg>
  </main>

  <footer class="status">
    <div class="layouts">
      <button class="lay one">布局1</button>
      <button class="lay">布局2</button>
      <button class="lay plus">+</button>
    </div>
    <div class="sbar">
      <button class="cell coords">3275.2902, 1126.3837, 0.0000</button>
      <button class="cell model">模型</button>
      {#each status as s}
        <div class="cell {s.sep || ''}">
          <button class="sb" class:on={s.on} aria-label={s.name}>{@render icon(s.ic)}</button>
          {#if s.drop}<button class="sd" aria-label="{s.name}设置"><i class="tri lg"></i></button>{/if}
          {#if s.tip}
            <i class="halo"></i>
            <div class="tip" role="tooltip"><strong>动态输入 - 关</strong><span>DYNMODE</span></div>
            <svg class="cursor" width="14" height="20" viewBox="0 0 14 20" aria-hidden="true"><path d="M1 0v16l3.500-3 2.500 6 3-1.500L7.500 12H12z" fill="#fff" /></svg>
          {/if}
        </div>
      {/each}
      <button class="cell scale">1:1 / 100%<i class="tri lg"></i></button>
      <div class="cell">
        <button class="sb" aria-label="切换工作空间">{@render icon('gear')}</button>
        <button class="sd" aria-label="工作空间列表"><i class="tri lg"></i></button>
      </div>
      <div class="cell wide"><button class="sb" aria-label="注释监视器">{@render icon('plus')}</button></div>
      <div class="cell units">
        {@render icon('rulerv')}
        <select aria-label="单位"><option>小数</option></select><i class="tri lg"></i>
      </div>
      <div class="cell"><button class="sb" aria-label="快捷特性">{@render icon('props')}</button></div>
      <div class="cell">
        <button class="sb" aria-label="锁定用户界面">{@render icon('lockui')}</button>
        <button class="sd" aria-label="锁定列表"><i class="tri lg"></i></button>
      </div>
      <div class="cell last"><button class="sb" aria-label="隔离对象">{@render icon('iso2')}</button></div>
    </div>
  </footer>

  <div class="taskbar">
    <div class="apps">
      <button aria-label="文件资源管理器">{@render icon('folder')}</button>
      <button aria-label="浏览器">{@render icon('ie')}</button>
      <button class="current" aria-label="AutoCAD">{@render icon('cad')}</button>
      <button class="running" aria-label="录制">{@render icon('rec')}</button>
    </div>
    <div class="tray">
      <button class="lang">EN</button>
      <button aria-label="显示隐藏的图标">{@render icon('chev')}</button>
      <button aria-label="麦克风">{@render icon('mic')}</button>
      <button class="recs" aria-label="录制">{@render icon('rec')}</button>
      <button aria-label="安全">{@render icon('shield')}</button>
      <button aria-label="网络">{@render icon('net')}</button>
      <button aria-label="音量">{@render icon('sound')}</button>
      <div class="clock"><span class="time">17</span><span>202</span></div>
    </div>
  </div>
</div>

<style>
  :global(body) {
    background: #212830;
    overflow: hidden;
  }
  .app {
    display: flex;
    flex-direction: column;
    height: 100vh;
    font: 12px/16px 'Noto Sans', 'Noto Sans CJK SC', sans-serif;
    color: #e2e6ea;
    background: #212830;
  }
  button {
    display: flex;
    align-items: center;
    background: none;
    border: 0;
    padding: 0;
    margin: 0;
    font: inherit;
    color: inherit;
    white-space: nowrap;
  }
  select,
  input {
    appearance: none;
    background: none;
    border: 0;
    padding: 0;
    margin: 0;
    font: inherit;
    color: inherit;
    min-width: 0;
    outline: 0;
  }
  .ico {
    display: block;
    flex: none;
    fill: none;
    stroke: #dfe3e8;
  }
  .tri {
    flex: none;
    width: 0;
    height: 0;
    border: 3px solid transparent;
    border-top-color: #dfe3e8;
    border-bottom: 0;
  }
  .tri.lg {
    border-width: 4px;
    border-bottom: 0;
  }

  .titlebar {
    display: flex;
    align-items: center;
    height: 22px;
    flex: none;
  }
  .qat {
    display: flex;
    align-items: center;
    gap: 6px;
    padding-left: 1px;
  }
  .qat .mini {
    width: 6px;
    justify-content: center;
  }
  .qat .mini.dim {
    opacity: 0.4;
  }
  .qat .mini:last-child {
    width: 10px;
  }
  h1 {
    flex: 1;
    display: flex;
    justify-content: center;
    gap: 16px;
    margin: 0;
    font-family: 'Open Sans', sans-serif;
    font-size: 13px;
    font-weight: 400;
  }
  .tools {
    display: flex;
    align-items: center;
    padding-right: 40px;
  }
  .play {
    border: 4px solid transparent;
    border-left-color: #dfe3e8;
    border-right: 0;
    margin-right: 6px;
  }
  .search {
    width: 175px;
    height: 20px;
    padding-left: 3px;
    background: #474f63;
    font-size: 11px;
    font-style: italic;
  }
  .search::placeholder {
    color: #b4bac6;
    opacity: 1;
  }
  .bino {
    margin-left: 5px;
  }
  .login {
    margin-left: 9px;
    gap: 5px;
  }
  .login .tri {
    margin-left: 55px;
  }
  .cart {
    margin-left: 12px;
  }
  .share {
    margin-left: 8px;
    gap: 5px;
  }
  .help {
    margin-left: 9px;
    padding-left: 10px;
    gap: 7px;
    height: 18px;
    border-left: 1px solid #4a5460;
  }
  .help b {
    width: 15px;
    height: 15px;
    border-radius: 50%;
    background: #eef1f5;
    color: #24385a;
    line-height: 15px;
    text-align: center;
  }

  .menus {
    box-sizing: border-box;
    display: flex;
    align-items: center;
    gap: 20px;
    padding: 3px 0 0 3px;
    height: 23px;
    flex: none;
    color: #aeb4bc;
  }
  .menus .latin {
    font-size: 13px;
  }
  .min {
    gap: 4px;
    margin-left: 10px;
  }

  .ribbon {
    display: flex;
    flex: none;
    height: 97px;
  }
  .panel {
    box-sizing: border-box;
    flex: none;
    display: flex;
    flex-direction: column;
    background: #3b4453;
    border-right: 1px solid #242c36;
  }
  .body {
    display: flex;
    height: 76px;
    padding-top: 4px;
  }
  .col {
    padding-top: 1px;
  }
  .ptitle {
    display: flex;
    flex: 1;
    align-items: center;
  }
  .pname {
    flex: 1;
    justify-content: center;
    gap: 6px;
  }
  .launch {
    width: 12px;
  }
  .big {
    flex: none;
    flex-direction: column;
    width: 42px;
  }
  .pic {
    display: flex;
    align-items: center;
    height: 38px;
  }
  .cap {
    line-height: 17px;
  }
  .big .tri {
    margin-top: 2px;
  }
  .small {
    display: flex;
    align-items: center;
    height: 24px;
  }
  .act {
    gap: 4px;
  }
  .drop {
    width: 14px;
    height: 24px;
    justify-content: center;
  }
  .line {
    display: flex;
    align-items: center;
    height: 24px;
  }
  .grow {
    flex: 1;
  }

  .draw {
    width: 211px;
    margin-left: -95px;
  }
  .draw .body {
    justify-content: flex-end;
    padding-right: 6px;
  }
  .draw .col {
    margin-left: 4px;
  }
  .draw .act {
    margin-right: 2px;
  }
  .modify {
    width: 227px;
  }
  .modify .body {
    display: grid;
    grid-template-columns: 59px 59px 75px 18px;
    padding-left: 6px;
  }
  .modify .drop {
    margin-left: 8px;
  }
  .annotate {
    width: 156px;
  }
  .annotate .body {
    padding-left: 4px;
  }
  .annotate .col {
    margin-left: 1px;
  }
  .annotate .drop {
    margin-left: 4px;
  }
  .layer {
    width: 252px;
  }
  .layer .col {
    padding-right: 2px;
  }
  .layer .line .small {
    margin: 0 3px;
  }
  .combo {
    box-sizing: border-box;
    display: flex;
    align-items: center;
    height: 22px;
    margin: 1px 0;
    padding: 0 1px 0 3px;
    gap: 10px;
    background: #4a5568;
    border: 1px solid #27303c;
    border-radius: 1px;
  }
  .combo select {
    flex: 1;
  }
  .layer .combo {
    gap: 1px;
    padding-left: 1px;
  }
  .swatch {
    flex: none;
    box-sizing: border-box;
    width: 14px;
    height: 14px;
    margin: 0 4px;
    background: #fff;
    outline: 1px solid #11151a;
  }
  .swatch.lg {
    width: 16px;
    height: 16px;
    margin: 0 0 0 8px;
    outline: 0;
  }
  .block {
    width: 134px;
  }
  .block .col {
    margin-left: 2px;
  }
  .block .drop {
    margin-left: 3px;
  }
  .props {
    width: 244px;
  }
  .props .line {
    gap: 2px;
  }
  .props .combo {
    flex: 1;
    margin-right: 2px;
  }
  .stroke {
    width: 64px;
    height: 1px;
    background: #e8eaec;
  }
  .props .combo.rule {
    gap: 3px;
    padding-left: 1px;
  }
  .group {
    width: 68px;
  }
  .group .small {
    width: 24px;
    justify-content: center;
  }
  .group .col {
    margin-left: -1px;
  }
  .picked {
    box-sizing: border-box;
    width: 24px;
    height: 22px;
    display: flex;
    align-items: center;
    justify-content: center;
    background: #3d5a73;
    border: 1px solid #7fb8e6;
  }
  .util .big,
  .clipb .big {
    width: 50px;
  }
  .util,
  .clipb {
    width: 76px;
  }
  .util .col,
  .clipb .col {
    margin-left: 2px;
  }
  .view {
    width: 60px;
    border-right: 0;
  }
  .view .body {
    justify-content: center;
  }

  .files {
    display: flex;
    align-items: flex-end;
    flex: none;
    height: 27px;
    border-bottom: 4px solid #434a54;
  }
  .tab {
    box-sizing: border-box;
    height: 22px;
    background: #2b323d;
  }
  .tab.prev {
    width: 48px;
    border-radius: 0 10px 10px 0;
  }
  .tab.active {
    display: flex;
    align-items: center;
    width: 124px;
    padding: 0 12px 0 11px;
    justify-content: space-between;
    background: #3b4453;
    border-radius: 8px 12px 0 0;
  }
  .tab .x {
    font-size: 14px;
    color: #b9bec6;
  }
  .tab.add {
    width: 20px;
    height: 15px;
    margin: 0 0 3px 8px;
    justify-content: center;
    border-radius: 3px 6px 6px 3px;
    font-size: 17px;
    font-weight: 700;
    color: #aeb4bc;
  }

  .canvas {
    position: relative;
    flex: 1;
    min-height: 0;
    overflow: hidden;
    background: #1f272e;
  }
  .scene {
    position: absolute;
    inset: 0;
  }
  .cross {
    position: absolute;
    left: 1071px;
    bottom: 0;
    pointer-events: none;
  }
  .vp {
    position: absolute;
    left: 0;
    top: 5px;
    font-size: 14px;
  }
  .cube {
    position: absolute;
    right: 0;
    top: 42px;
  }
  .cube text {
    font-size: 18px;
    fill: #b9bcbf;
  }
  .wcs {
    position: absolute;
    right: 0;
    top: 193px;
    width: 19px;
    height: 18px;
    padding-left: 4px;
    overflow: hidden;
    border-radius: 4px 0 0 4px;
    background: #85898e;
    color: #c0c3c6;
  }
  .badge {
    position: absolute;
    right: -19px;
    bottom: 99px;
    width: 58px;
    height: 58px;
    border-radius: 50%;
    background: linear-gradient(#333c48, #2a3142);
    box-shadow: 0 0 3px #11161c;
  }
  .badge svg {
    position: absolute;
    inset: 0;
  }
  .badge span {
    position: absolute;
    left: 11px;
    top: 14px;
    font: 300 25px/30px Roboto, sans-serif;
    color: #dfe3ea;
  }
  .command {
    position: absolute;
    left: 287px;
    right: 287px;
    bottom: 0;
    display: flex;
    height: 27px;
  }
  .handle {
    display: flex;
    align-items: center;
    gap: 6px;
    width: 52px;
    padding: 0 0 2px 4px;
    background: #262d36;
    color: #c8ccd1;
    font-size: 14px;
  }
  .wrench {
    margin-left: 4px;
  }
  .dots {
    width: 5px;
    height: 17px;
    background: repeating-linear-gradient(#c8ccd1 0 2px, transparent 2px 3px);
  }
  .entry {
    flex: 1;
    display: flex;
    align-items: center;
    gap: 3px;
    height: 25px;
    padding: 0 3px 0 4px;
    background: #bdbec0;
    border-radius: 2px;
    color: #5b5f64;
    font-size: 13px;
  }
  .entry input {
    flex: 1;
    margin-left: 2px;
    font-style: italic;
  }
  .entry input::placeholder {
    color: #63676c;
    opacity: 1;
  }
  .entry .tri {
    border-top-color: #4b4f55;
  }
  .up .tri {
    transform: rotate(180deg);
  }

  .status {
    display: flex;
    justify-content: space-between;
    flex: none;
    height: 28px;
    border-top: 1px solid #3d444c;
    background: #212730;
  }
  .layouts {
    display: flex;
    gap: 4px;
    overflow: hidden;
    color: #aeb4bc;
  }
  .lay {
    justify-content: center;
    width: 50px;
    height: 17px;
    background: #2c333d;
    border-radius: 0 0 8px 8px;
  }
  .lay.one {
    box-sizing: border-box;
    width: 14px;
    justify-content: flex-end;
    padding-right: 10px;
  }
  .lay.plus {
    width: 21px;
    margin-left: 3px;
    font-size: 16px;
    font-weight: 700;
  }
  .sbar {
    display: flex;
    gap: 2px;
    padding-top: 1px;
  }
  .cell {
    position: relative;
    display: flex;
    align-items: center;
    height: 24px;
    background: #363e4c;
  }
  .cell.wide {
    margin-right: 3px;
  }
  .coords {
    width: 180px;
    justify-content: center;
    color: #fff;
  }
  .model {
    width: 29px;
    justify-content: center;
    color: #fff;
    font-weight: 500;
  }
  .sb {
    width: 23px;
    height: 22px;
    justify-content: center;
    overflow: hidden;
  }
  .sb.on {
    background: #5c8dbf;
  }
  .sb.on .ico {
    stroke: #fff;
  }
  .sd {
    width: 14px;
    height: 24px;
    justify-content: center;
  }
  .scale {
    width: 70px;
    justify-content: center;
    gap: 4px;
  }
  .units {
    box-sizing: border-box;
    width: 98px;
    padding-right: 5px;
    font-weight: 700;
  }
  .units select {
    flex: 1;
    margin-left: 6px;
  }
  .last {
    width: 9px;
    overflow: hidden;
  }
  .last .sb {
    flex: none;
  }
  .halo {
    position: absolute;
    left: -28px;
    top: -28px;
    width: 58px;
    height: 58px;
    border-radius: 50%;
    background: #ffff10;
    mix-blend-mode: multiply;
  }
  .tip {
    position: absolute;
    left: 0;
    bottom: 29px;
    display: flex;
    flex-direction: column;
    gap: 4px;
    padding: 7px 7px 6px;
    background: #fafafa;
    border: 1px solid #fff;
    border-radius: 2px;
    box-shadow: 0 0 2px #000;
    white-space: nowrap;
    color: #6b6b6b;
  }
  .tip strong {
    font-weight: 500;
    color: #111;
  }
  .tip::after {
    content: '';
    position: absolute;
    left: 6px;
    top: 100%;
    border: 5px solid transparent;
    border-top-color: #f4f410;
    border-bottom: 0;
  }
  .cursor {
    position: absolute;
    left: 1px;
    top: 2px;
  }

  .taskbar {
    display: flex;
    justify-content: space-between;
    flex: none;
    height: 40px;
    background: linear-gradient(90deg, #20373f, #1f363f 45%, #1b2a42 62%, #1a2540);
  }
  .apps {
    display: flex;
    padding-left: 3px;
  }
  .apps button {
    width: 49px;
    justify-content: center;
    border-bottom: 2px solid transparent;
  }
  .apps .current {
    width: 47px;
    background: #54666c;
    border-color: #7db6df;
  }
  .apps .running {
    width: 40px;
    margin-left: 7px;
    border-color: #7db6df;
  }
  .tray {
    display: flex;
    align-items: center;
    color: #fff;
  }
  .tray button {
    width: 24px;
    justify-content: center;
  }
  .tray .lang {
    margin-right: 18px;
    padding-bottom: 3px;
    font-family: 'Liberation Serif', serif;
  }
  .recs :global(svg) {
    width: 18px;
    height: 18px;
  }
  .clock {
    display: flex;
    flex-direction: column;
    width: 20px;
    margin-left: 10px;
    line-height: 19px;
    overflow: hidden;
  }
  .time {
    padding-left: 11px;
  }
</style>
